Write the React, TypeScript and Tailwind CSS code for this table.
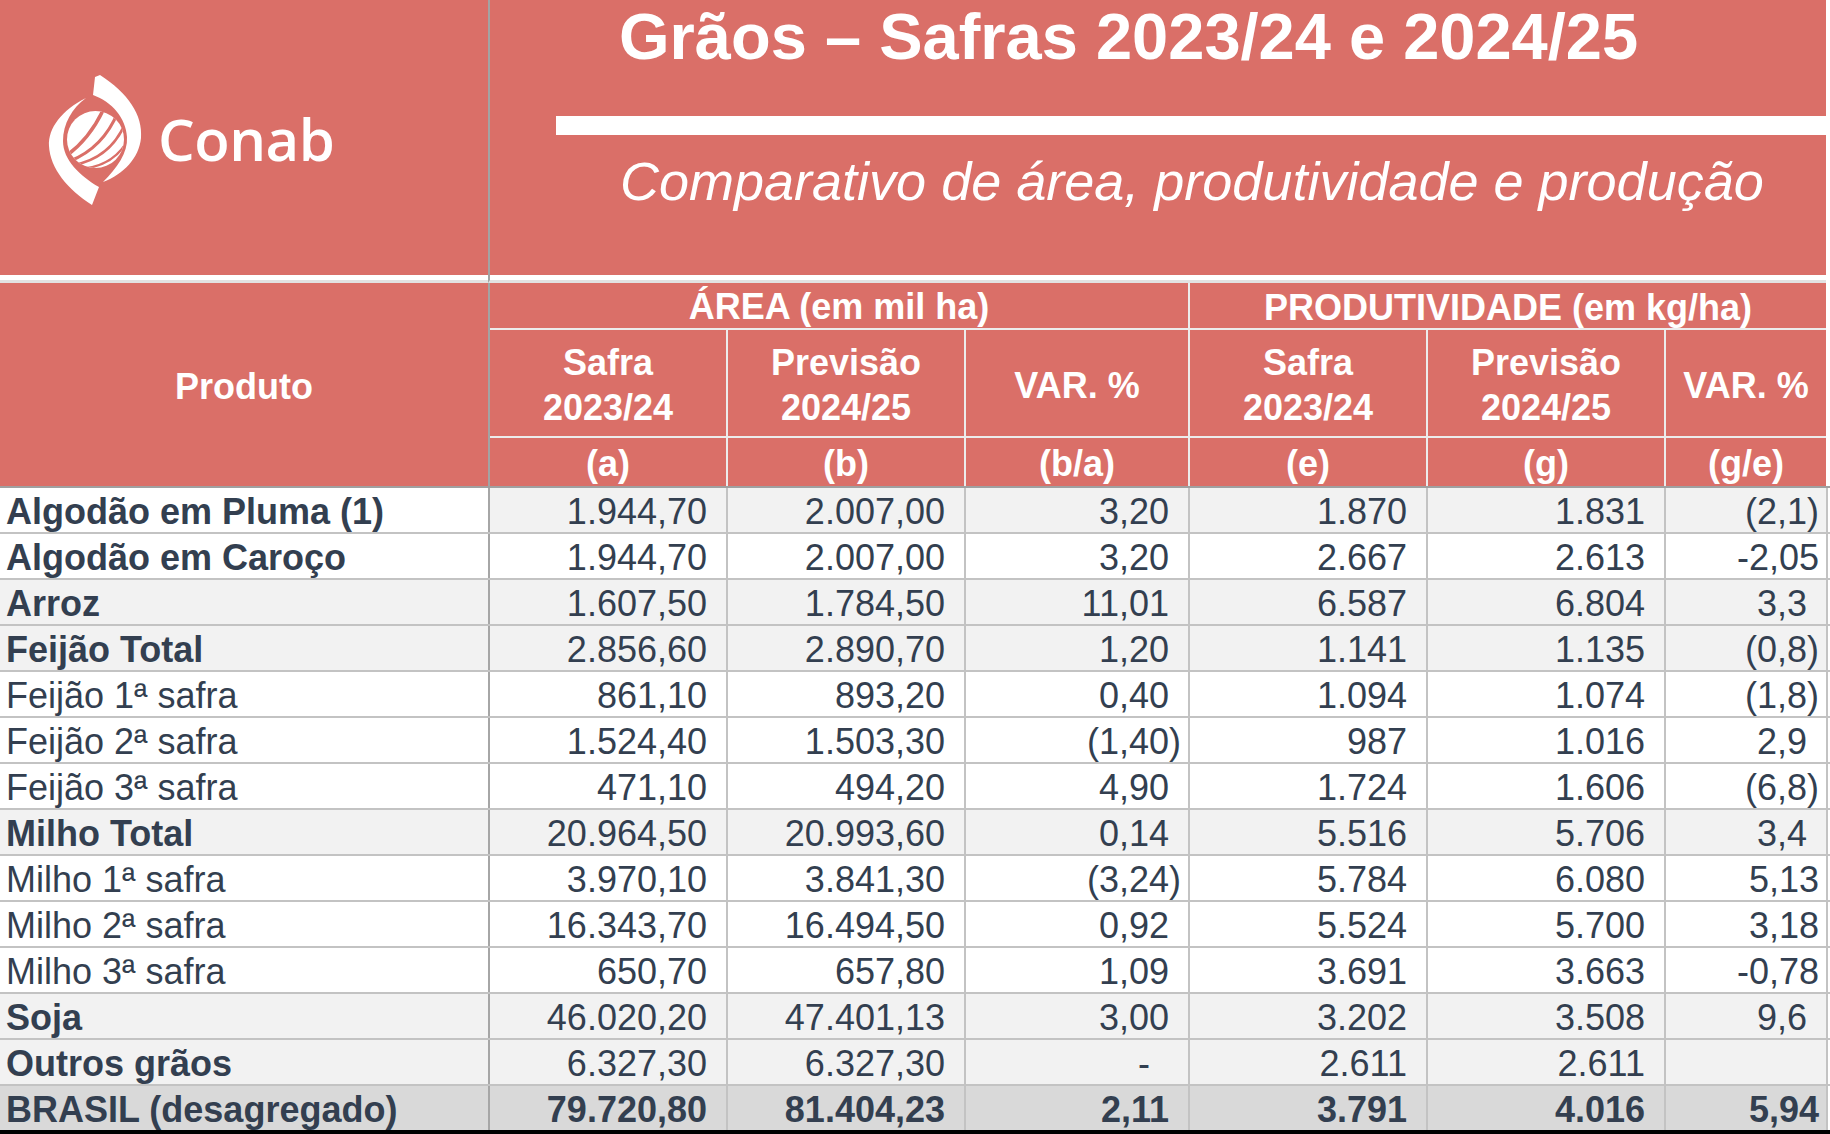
import React from "react";

const P7 = "pr-[7px]";
const P19 = "pr-[19px]";
const P38 = "pr-[38px]";

type Row = {
  n: string;
  b: boolean;
  pbg: string;
  nbg: string;
  v: [string, string][];
};

const W = "bg-white";
const G = "bg-[#f2f2f2]";
const T = "bg-[#d9d9d9]";

const rows: Row[] = [
  { n: "Algodão em Pluma (1)", b: true, pbg: W, nbg: G, v: [["1.944,70", P19], ["2.007,00", P19], ["3,20", P19], ["1.870", P19], ["1.831", P19], ["(2,1)", P7]] },
  { n: "Algodão em Caroço", b: true, pbg: W, nbg: W, v: [["1.944,70", P19], ["2.007,00", P19], ["3,20", P19], ["2.667", P19], ["2.613", P19], ["-2,05", P7]] },
  { n: "Arroz", b: true, pbg: G, nbg: G, v: [["1.607,50", P19], ["1.784,50", P19], ["11,01", P19], ["6.587", P19], ["6.804", P19], ["3,3", P19]] },
  { n: "Feijão Total", b: true, pbg: G, nbg: G, v: [["2.856,60", P19], ["2.890,70", P19], ["1,20", P19], ["1.141", P19], ["1.135", P19], ["(0,8)", P7]] },
  { n: "Feijão 1ª safra", b: false, pbg: W, nbg: W, v: [["861,10", P19], ["893,20", P19], ["0,40", P19], ["1.094", P19], ["1.074", P19], ["(1,8)", P7]] },
  { n: "Feijão 2ª safra", b: false, pbg: W, nbg: W, v: [["1.524,40", P19], ["1.503,30", P19], ["(1,40)", P7], ["987", P19], ["1.016", P19], ["2,9", P19]] },
  { n: "Feijão 3ª safra", b: false, pbg: W, nbg: W, v: [["471,10", P19], ["494,20", P19], ["4,90", P19], ["1.724", P19], ["1.606", P19], ["(6,8)", P7]] },
  { n: "Milho Total", b: true, pbg: G, nbg: G, v: [["20.964,50", P19], ["20.993,60", P19], ["0,14", P19], ["5.516", P19], ["5.706", P19], ["3,4", P19]] },
  { n: "Milho 1ª safra", b: false, pbg: W, nbg: W, v: [["3.970,10", P19], ["3.841,30", P19], ["(3,24)", P7], ["5.784", P19], ["6.080", P19], ["5,13", P7]] },
  { n: "Milho 2ª safra", b: false, pbg: W, nbg: W, v: [["16.343,70", P19], ["16.494,50", P19], ["0,92", P19], ["5.524", P19], ["5.700", P19], ["3,18", P7]] },
  { n: "Milho 3ª safra", b: false, pbg: W, nbg: W, v: [["650,70", P19], ["657,80", P19], ["1,09", P19], ["3.691", P19], ["3.663", P19], ["-0,78", P7]] },
  { n: "Soja", b: true, pbg: G, nbg: G, v: [["46.020,20", P19], ["47.401,13", P19], ["3,00", P19], ["3.202", P19], ["3.508", P19], ["9,6", P19]] },
  { n: "Outros grãos", b: true, pbg: G, nbg: G, v: [["6.327,30", P19], ["6.327,30", P19], ["-", P38], ["2.611", P19], ["2.611", P19], ["", P7]] },
];

const total: Row = {
  n: "BRASIL (desagregado)",
  b: true,
  pbg: T,
  nbg: T,
  v: [["79.720,80", P19], ["81.404,23", P19], ["2,11", P19], ["3.791", P19], ["4.016", P19], ["5,94", P7]],
};

const colW = ["w-[238px]", "w-[238px]", "w-[224px]", "w-[238px]", "w-[238px]", "w-[164px]"];
const colB = [
  "border-l-2 border-[#a6a6a6]",
  "border-l-2 border-[#c3c3c3]",
  "border-l-2 border-[#c3c3c3]",
  "border-l-2 border-[#c3c3c3]",
  "border-l-2 border-[#c3c3c3]",
  "border-l-2 border-r-2 border-[#c3c3c3]",
];

function Logo() {
  return (
    <svg width="110" height="140" viewBox="40 70 110 140" className="shrink-0">
      <defs>
        <clipPath id="conabGlobe">
          <circle cx="95.5" cy="139.5" r="28.5" />
        </clipPath>
      </defs>
      <path
        d="M100 75 C128 93 143 115 141 138 C139 158 124 174 103 182 C117 168 128 153 127 137 C126 118 112 102 93 95 L95 77 Z"
        fill="#fff"
      />
      <path
        d="M86 98 C62 110 48 128 49 146 C50 168 68 190 92 205 L99 187 C80 176 63 160 63 141 C63 124 72 108 86 98 Z"
        fill="#fff"
      />
      <circle cx="95.5" cy="139.5" r="28.5" fill="#fff" />
      <g clipPath="url(#conabGlobe)" stroke="#DA6F68" fill="none" strokeLinecap="round">
        <path d="M66 156 Q91 138 105 106" strokeWidth="3.5" />
        <path d="M70 161 Q103 148 118 112" strokeWidth="3.2" />
        <path d="M74 165 Q110 158 125 124" strokeWidth="2.8" />
        <path d="M79 169 Q113 167 128 140" strokeWidth="2.4" />
      </g>
    </svg>
  );
}

function DataRow({ r, last }: { r: Row; last?: boolean }) {
  const weight = last ? "font-bold" : "font-normal";
  return (
    <div
      className={
        last
          ? "flex h-[48px] border-b-4 border-black"
          : "flex h-[46px] border-b-2 border-[#c3c3c3]"
      }
    >
      <div
        className={`w-[488px] flex items-center pl-[6px] pt-[4px] whitespace-nowrap ${r.pbg} ${
          r.b ? "font-bold" : "font-normal"
        }`}
      >
        {r.n}
      </div>
      {r.v.map(([val, pad], i) => (
        <div
          key={i}
          className={`${colW[i]} ${colB[i]} ${r.nbg} ${pad} ${weight} pt-[4px] flex items-center justify-end whitespace-nowrap`}
        >
          {val}
        </div>
      ))}
    </div>
  );
}

const HC = "border-l-2 border-[#ececec] flex items-center justify-center pt-[4px]";
const HC2 = "border-l-2 border-[#ececec] flex flex-col items-center justify-center pt-[4px]";

export default function App() {
  return (
    <div className="w-[1830px] h-[1134px] bg-white overflow-hidden font-['Liberation_Sans',Arial,sans-serif]">
      {/* Top header */}
      <div className="flex w-[1826px] h-[275px]">
        <div className="w-[488px] h-full bg-[#DA6F68] flex items-start pl-[40px] pt-[70px]">
          <Logo />
          <span className="ml-[8px] mt-[40px] font-['Open_Sans',sans-serif] font-semibold text-white text-[58px] leading-none tracking-[-0.5px]">
            Conab
          </span>
        </div>
        <div className="w-[1338px] h-full bg-[#DA6F68] border-l-2 border-[#a3a3a3] flex flex-col">
          <div className="pl-[129px] pt-[4px] h-[68px] text-[65px] leading-none font-bold text-white whitespace-nowrap">
            Grãos – Safras 2023/24 e 2024/25
          </div>
          <div className="ml-[66px] mt-[48px] h-[19px] bg-white" />
          <div className="pl-[130px] mt-[19px] text-[54px] leading-none italic text-white whitespace-nowrap">
            Comparativo de área, produtividade e produção
          </div>
        </div>
      </div>

      {/* separator band */}
      <div className="flex w-[1826px] h-[8px]">
        <div className="w-[488px] h-full bg-white border-b-[3px] border-[#e2e2e2]" />
        <div className="w-[1338px] h-full bg-white border-l-2 border-l-[#a3a3a3] border-b-[3px] border-b-[#e2e2e2]" />
      </div>

      {/* table header */}
      <div className="flex w-[1826px] h-[203px] bg-[#DA6F68] text-white font-bold text-[36px] leading-none">
        <div className="w-[488px] flex items-center justify-center pt-[4px]">Produto</div>
        <div className="w-[1338px] border-l-2 border-[#a3a3a3] flex flex-col">
          <div className="h-[47px] flex border-b-2 border-[#ececec]">
            <div className="w-[698px] flex items-center justify-center whitespace-nowrap pt-[3px]">ÁREA (em mil ha)</div>
            <div className={`w-[638px] whitespace-nowrap ${HC}`}>PRODUTIVIDADE (em kg/ha)</div>
          </div>
          <div className="h-[108px] flex border-b-2 border-[#ececec] leading-[45px] text-center">
            <div className="w-[236px] flex flex-col items-center justify-center pt-[4px]">
              <span>Safra</span>
              <span>2023/24</span>
            </div>
            <div className={`w-[238px] ${HC2}`}>
              <span>Previsão</span>
              <span>2024/25</span>
            </div>
            <div className={`w-[224px] ${HC}`}>VAR. %</div>
            <div className={`w-[238px] ${HC2}`}>
              <span>Safra</span>
              <span>2023/24</span>
            </div>
            <div className={`w-[238px] ${HC2}`}>
              <span>Previsão</span>
              <span>2024/25</span>
            </div>
            <div className={`w-[162px] ${HC}`}>VAR. %</div>
          </div>
          <div className="h-[48px] flex">
            <div className="w-[236px] flex items-center justify-center pt-[4px]">(a)</div>
            <div className={`w-[238px] ${HC}`}>(b)</div>
            <div className={`w-[224px] ${HC}`}>(b/a)</div>
            <div className={`w-[238px] ${HC}`}>(e)</div>
            <div className={`w-[238px] ${HC}`}>(g)</div>
            <div className={`w-[162px] ${HC}`}>(g/e)</div>
          </div>
        </div>
      </div>

      {/* data */}
      <div className="w-[1830px] border-t-2 border-[#a0a0a0] text-[36px] leading-none text-[#333F50]">
        {rows.map((r, i) => (
          <DataRow key={i} r={r} />
        ))}
        <DataRow r={total} last />
      </div>
    </div>
  );
}
